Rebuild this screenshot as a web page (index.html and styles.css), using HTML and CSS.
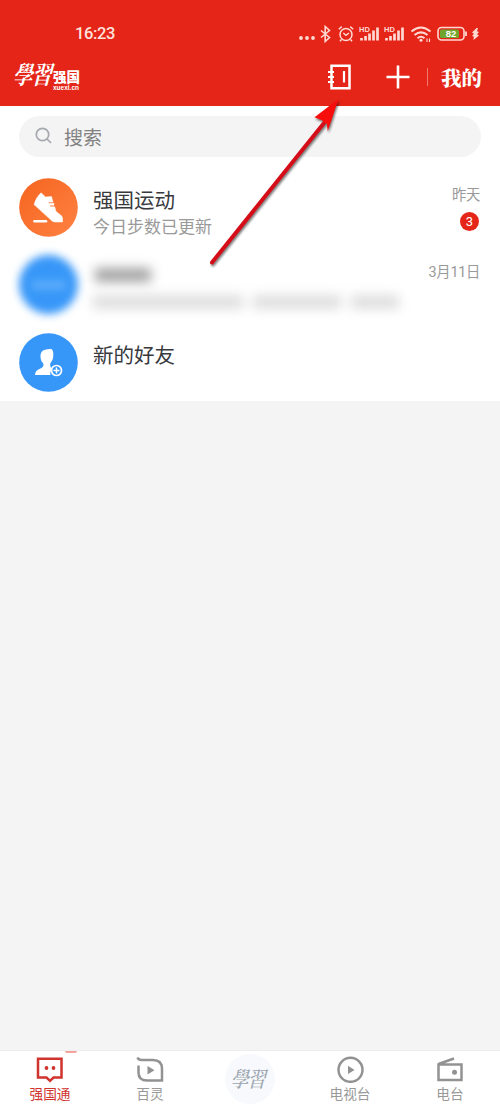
FILE: index.html
```html
<!DOCTYPE html>
<html lang="zh-CN">
<head>
<meta charset="utf-8">
<title>强国通</title>
<link rel="stylesheet" href="styles.css">
</head>
<body>
<div class="screen">
  <header class="top">
    <div class="status">
      <span class="time">16:23</span>
      <div class="status-icons">
        <svg width="18" height="20" viewBox="0 0 18 20"><g fill="#ffd9d2"><circle cx="3" cy="14" r="1.9"/><circle cx="9" cy="14" r="1.9"/><circle cx="15" cy="14" r="1.9"/></g></svg>
        <svg class="bt" width="11" height="20" viewBox="0 0 11 20"><path d="M1 6.5l8.5 7-4.3 4V2.5l4.3 4-8.5 7" fill="none" stroke="#ffd9d2" stroke-width="1.6"/></svg>
        <svg class="alarm" width="16" height="20" viewBox="0 0 16 20"><g fill="none" stroke="#ffd9d2" stroke-width="1.5"><circle cx="8" cy="10.5" r="6"/><path d="M5.3 9l2.7 2.3L11 9M.8 5.2l3-2.6M15.2 5.2l-3-2.6M3.5 15.5L2 17.3M12.5 15.500l1.500 1.800"/></g></svg>
        <svg class="sig" width="21" height="20" viewBox="0 0 21 20"><text x="0" y="7.500" class="hd">HD</text><path d="M2.500 16.500v-2.500M6.500 16.500v-4.500M10.500 16.500V9.500M14.500 16.500V6.500M18.500 16.500V3.500" stroke="#ffd9d2" stroke-width="2.700"/></svg>
        <svg class="sig2" width="21" height="20" viewBox="0 0 21 20"><text x="0" y="7.500" class="hd">HD</text><path d="M2.500 16.500v-2.500M6.500 16.500v-4.500M10.500 16.500V9.500M14.500 16.500V6.500M18.500 16.500V3.500" stroke="#ffd9d2" stroke-width="2.700"/></svg>
        <svg class="wifi" width="21" height="20" viewBox="0 0 21 20"><g fill="none" stroke="#ffd9d2" stroke-width="2"><path d="M.5 7.500q9.500-8 19 0M3.500 11q6.500-5.300 13 0M6.500 14.200q3.500-2.800 7 0"/></g><circle cx="10" cy="16.300" r="1.500" fill="#ffd9d2"/><path d="M16 14.500v3.500M18.500 14.500v3.500" stroke="#ffd9d2" stroke-width="1.100"/></svg>
        <svg class="bat" width="31" height="20" viewBox="0 0 31 20"><rect x="1" y="3.500" width="26" height="12.500" rx="3.500" fill="none" stroke="#ffd9d2" stroke-width="1.600"/><rect x="3" y="5.500" width="19" height="8.500" rx="1.500" fill="#6fa52c"/><path d="M29 7.500v4.500" stroke="#ffd9d2" stroke-width="1.800"/><text x="14" y="13.200" class="pct">82</text></svg>
        <svg class="bolt" width="9" height="20" viewBox="0 0 9 20"><path d="M5.500 4L1 8.500l2 1.200-2 2.300 1.800.6L2.500 16 8 11.500l-2-1.200L8 8l-2-.7L7 4z" fill="#ffd9d2"/></svg>
      </div>
    </div>
    <div class="bar">
      <div class="logo">
        <span class="brush">學習</span>
        <span class="word"><b>强国</b><i>xuexi.cn</i></span>
      </div>
      <svg class="book" width="26" height="28" viewBox="0 0 26 28"><g fill="none" stroke="#fff" stroke-width="2.500"><path d="M4.500 2.700h18v22.500h-18z"/><path d="M1 9h6M1 14h6M1 19h6" stroke-width="2"/><path d="M17 8v11.500" stroke-width="2.200"/></g></svg>
      <svg class="plus" width="24" height="24" viewBox="0 0 24 24"><path d="M12 .5v23M.5 12h23" stroke="#fff" stroke-width="2.600"/></svg>
      <span class="rule"></span>
      <span class="mine">我的</span>
    </div>
  </header>

  <main class="list">
    <div class="search">
      <svg width="18" height="18" viewBox="0 0 18 18"><g fill="none" stroke="#a5a8ae" stroke-width="1.700"><circle cx="7.500" cy="7.500" r="6.200"/><path d="M12 12l4 4"/></g></svg>
      <span>搜索</span>
    </div>
    <div class="row">
      <svg class="avatar" width="59" height="59" viewBox="0 0 59 59"><defs><linearGradient id="o" x1="0" y1="0" x2="1" y2="1"><stop offset="0" stop-color="#f5641f"/><stop offset="1" stop-color="#ff8243"/></linearGradient></defs><circle cx="29.500" cy="29.500" r="29.300" fill="url(#o)"/><path d="M22 14.800L26.500 19 32.500 18.500 34 24h-4.500v1.200H35v2h-4v1.600h4.700L37 33.500l5.500 4.300Q44 39.500 43.500 44H36q-2.500 0-4.500-2.500L15 26.500q2-7 7-11.700z" fill="#fff" stroke="#fff" stroke-width=".5" stroke-linejoin="round"/><path d="M15.500 43.300H27" stroke="#fff" stroke-width="2.600" stroke-linecap="round"/></svg>
      <div class="info"><div class="name">强国运动</div><div class="sub">今日步数已更新</div></div>
      <div class="side"><span>昨天</span><span class="badge">3</span></div>
    </div>
    <div class="row">
      <div class="avatar hidden-avatar"><i></i></div>
      <div class="info hidden-info">
        <div class="smudge-name"></div>
        <div class="smudge-line"><i class="a"></i><i class="b"></i><i class="c"></i></div>
      </div>
      <div class="side"><span>3月11日</span></div>
    </div>
    <div class="row">
      <svg class="avatar" width="59" height="59" viewBox="0 0 59 59"><circle cx="29.500" cy="29.500" r="29.300" fill="#3797f8"/><path d="M24 17.500q3-1.800 8-1.500c2.300.5 2.500 4 2.200 8-.3 3.500-2 4.500-3 6.500-.3 3 .5 4.500 2.800 5.500-3 2-3 4-2.500 6H16c0-3.500 2-5 5-6.300 3-1.500 4-2.500 3.300-5.200-2-2-2.600-4-2.800-6.500-.2-3 .5-5 2.500-6.500z" fill="#fff"/><circle cx="37.500" cy="37.500" r="5" fill="#3797f8" stroke="#fff" stroke-width="1.700"/><path d="M37.500 34.500v6M34.500 37.500h6" stroke="#fff" stroke-width="1.500"/></svg>
      <div class="info"><div class="name">新的好友</div></div>
    </div>
  </main>

  <nav class="tabs">
    <div class="tab active"><span class="dot"></span>
      <svg width="28" height="28" viewBox="0 0 28 28"><path d="M2 3.800h23.500v18.700h-8L14 25.800l-3.500-3.300H2z" fill="none" stroke="#d0342e" stroke-width="2.500"/><circle cx="10.500" cy="13" r="1.900" fill="#d0342e"/><circle cx="17.500" cy="13" r="1.900" fill="#d0342e"/></svg>
      <span>强国通</span></div>
    <div class="tab">
      <svg width="28" height="28" viewBox="0 0 28 28"><path d="M1.500 2.500Q2.500 5 5.500 5H17q9 0 9 9v11.500H11Q2.500 25.500 2.500 17.500V10.500" fill="none" stroke="#929292" stroke-width="2.500"/><path d="M11.500 11v8.500l7-4.300z" fill="#929292"/></svg>
      <span>百灵</span></div>
    <div class="tab center"><span class="seal"><b>學習</b></span></div>
    <div class="tab">
      <svg width="28" height="28" viewBox="0 0 28 28"><circle cx="14.500" cy="14.800" r="12" fill="none" stroke="#929292" stroke-width="2.500"/><path d="M12 10.700v8.400l6.500-4.200z" fill="#929292"/></svg>
      <span>电视台</span></div>
    <div class="tab">
      <svg width="28" height="28" viewBox="0 0 28 28"><path d="M2.500 9.500h23v15.500h-23zM2.500 9L18 3.500" fill="none" stroke="#929292" stroke-width="2.500"/><circle cx="18.500" cy="17.300" r="2.500" fill="#929292"/></svg>
      <span>电台</span></div>
  </nav>

  <svg class="arrow" width="150" height="185" viewBox="0 0 150 185"><g class="shape"><path d="M12 172.500L124 33" stroke="#d40d18" stroke-width="4" stroke-linecap="round"/><path d="M138.500 9l-24 18.300 7.300 3 5 3.500 1 7.400z" fill="#f80d0d"/></g></svg>
</div>
</body>
</html>
```
FILE: styles.css
```css
* { box-sizing: border-box; }
body { margin: 0; font-family: "Noto Sans CJK SC", sans-serif; color: #38393d; }
svg { display: block; flex: none; }
.screen { position: relative; width: 500px; height: 1111px; display: flex; flex-direction: column; background: #f4f4f4; overflow: hidden; }

.top { height: 106px; background: #e42518; }
.status { display: flex; height: 50px; padding: 24px 20px 0 75px; justify-content: space-between; }
.time { font: 500 16.5px/20px Roboto, "Noto Sans CJK SC", sans-serif; color: #ffe3dd; letter-spacing: -.4px; }
.status-icons { display: flex; }
.bt { margin-left: 4px; }
.alarm { margin-left: 7px; }
.sig { margin-left: 5px; }
.sig2 { margin-left: 4px; }
.wifi { margin-left: 6px; }
.bat { margin-left: 5px; }
.bolt { margin-left: 3px; }
.hd { font: 700 7.5px "Liberation Sans", sans-serif; fill: #ffd9d2; }
.pct { font: 700 9.5px "Liberation Sans", sans-serif; fill: #fff; text-anchor: middle; }

.bar { display: flex; align-items: center; height: 54px; padding: 0 18px 0 14px; color: #fff; }
.logo { display: flex; align-items: center; width: 314px; height: 36px; }
.brush { width: 39px; font: 700 20px/36px "Noto Serif CJK TC", "Noto Sans CJK TC", serif; letter-spacing: -1px; white-space: nowrap; transform: translate(1px, -3px) skewX(-14deg) scaleY(1.25); }
.word { display: flex; flex-direction: column; padding-top: 4px; }
.word b { font-size: 13.5px; line-height: 16px; font-weight: 900; }
.word i { font: 700 6.5px/7px "Liberation Sans", sans-serif; }
.plus { margin-left: 33px; }
.rule { width: 1px; height: 18px; margin: 0 13px 0 17px; background: #f17a70; }
.mine { font: 900 20.5px/30px "Noto Serif CJK SC", "Noto Sans CJK SC", serif; white-space: nowrap; }

.list { height: 295px; padding-top: 9.500px; background: #fff; }
.search { display: flex; align-items: center; gap: 11px; height: 41px; margin: 0 19px 11px; padding-left: 16px; border-radius: 21px; background: #f4f4f4; color: #828282; font-size: 19px; line-height: 41px; }
.row { display: flex; height: 77.500px; padding: 10px 20px 0 19px; }
.avatar { width: 59px; height: 59px; flex: none; }
.info { flex: 1; padding: 6px 0 0 15px; }
.name { font-size: 20.500px; line-height: 30px; }
.sub { margin-top: -1px; font-size: 17px; line-height: 26px; color: #999; }
.side { display: flex; flex-direction: column; align-items: flex-end; padding-top: 6px; font-family: Roboto, "Noto Sans CJK SC", sans-serif; line-height: 22px; color: #999; white-space: nowrap; }
.side span:first-child { font-size: 14.300px; letter-spacing: -.25px; }
.badge { width: 19px; height: 19px; margin: 6px 1px 0 0; border-radius: 50%; background: #e42518; color: #fff; font-size: 13px; line-height: 19px; text-align: center; }
.hidden-avatar { display: flex; align-items: center; justify-content: center; border-radius: 50%; background: #3797f8; filter: blur(4.500px); }
.hidden-avatar i { width: 34px; height: 8px; background: #62b0fb; }
.smudge-name { width: 56px; height: 14px; margin: 7px 0 0 2px; background: #a2a2a2; filter: blur(6px); }
.smudge-line { display: flex; gap: 10px; margin-top: 13px; filter: blur(6px); }
.smudge-line i { height: 14px; background: #dedede; }
.smudge-line .a { width: 150px; }
.smudge-line .b { width: 88px; }
.smudge-line .c { width: 48px; }
.hidden-info { flex: none; width: 330px; }
.hidden-info + .side { margin-left: auto; }

.tabs { display: flex; height: 61px; margin-top: auto; background: #fff; border-top: 1px solid #eee; }
.tab { position: relative; flex: 1; display: flex; flex-direction: column; align-items: center; padding-top: 4px; color: #999; font-size: 13.700px; line-height: 20px; }
.tab.active { color: #d0342e; }
.dot { position: absolute; top: 0; left: 65px; width: 12px; height: 2px; border-radius: 0 0 6px 6px; background: #f5a49d; }
.seal { width: 50px; height: 50px; margin-top: -1px; border-radius: 50%; background: #f7f9fc; display: flex; align-items: center; justify-content: center; }
.seal b { font: 500 18px/28px "Noto Serif CJK TC", "Noto Sans CJK TC", serif; letter-spacing: -1px; color: #9ba5b0; transform: translateY(-2px) skewX(-14deg) scaleY(1.200); }
.arrow { position: absolute; left: 200px; top: 90px; }
.shape { filter: drop-shadow(1.500px 2px 1.200px rgba(0, 0, 0, .5)); }
```
